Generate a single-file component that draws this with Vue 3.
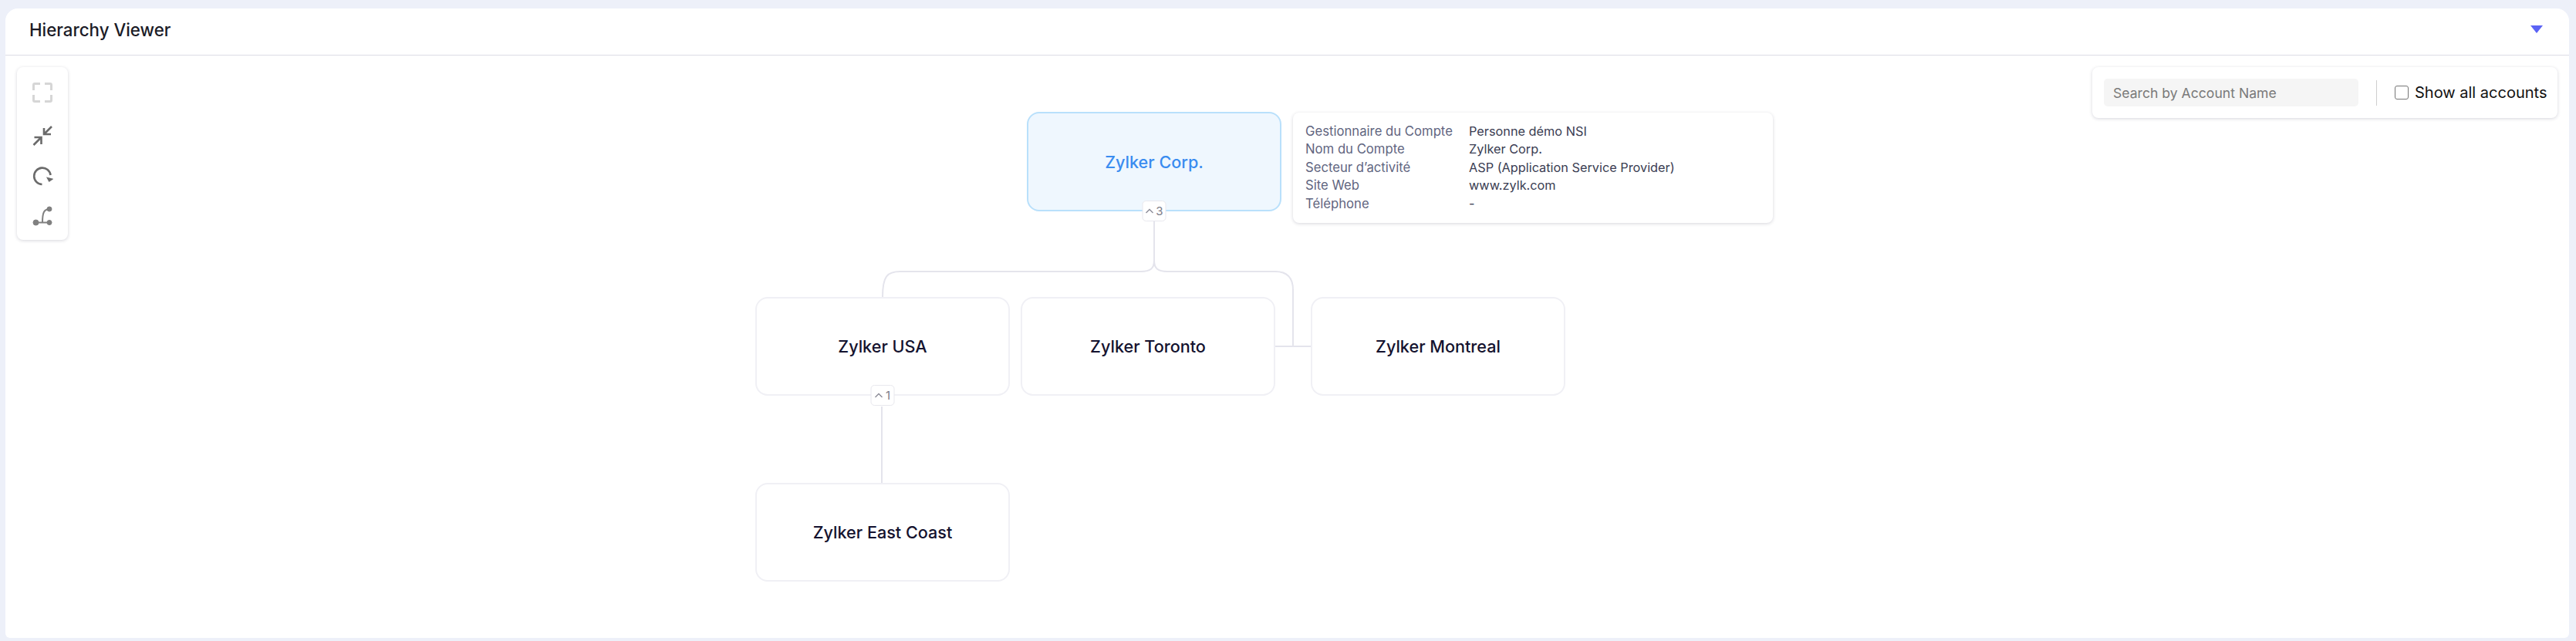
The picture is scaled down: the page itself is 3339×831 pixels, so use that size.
<script setup>
import { ref } from 'vue'

const showAll = ref(false)
const search = ref('')

// node places on the diagram, relative to the canvas
const nodes = [
  { id: 'corp', name: 'Zylker Corp.', x: 1324, y: 73, root: true, count: 3 },
  { id: 'usa', name: 'Zylker USA', x: 972, y: 313, count: 1 },
  { id: 'toronto', name: 'Zylker Toronto', x: 1316, y: 313 },
  { id: 'montreal', name: 'Zylker Montreal', x: 1692, y: 313 },
  { id: 'east', name: 'Zylker East Coast', x: 972, y: 554 }
]

const details = [
  { label: 'Gestionnaire du Compte', value: 'Personne démo NSI' },
  { label: 'Nom du Compte', value: 'Zylker Corp.' },
  { label: "Secteur d’activité", value: 'ASP (Application Service Provider)' },
  { label: 'Site Web', value: 'www.zylk.com' },
  { label: 'Téléphone', value: '-' }
]

const links = [
  'M1489 215V266C1489 276 1484 280 1472 280H1160C1143 280 1137 286 1137 313',
  'M1489 266C1489 276 1494 280 1506 280H1646C1662 280 1669 288 1669 304V377',
  'M1646 377H1692',
  'M1136 455V554'
]
</script>

<template>
  <div class="page">
    <section class="panel">
      <header class="panel-head">
        <h1 class="panel-title">Hierarchy Viewer</h1>
        <span class="caret"></span>
      </header>

      <div class="canvas">
        <svg class="links" width="3323" height="744" fill="none">
          <path v-for="(d, i) in links" :key="i" :d="d" />
        </svg>

        <div
          v-for="node in nodes"
          :key="node.id"
          class="node"
          :class="{ root: node.root }"
          :style="{ left: node.x + 'px', top: node.y + 'px' }"
        >
          {{ node.name }}
          <span v-if="node.count" class="count">
            <svg width="11" height="7" viewBox="0 0 11 7" fill="none">
              <path d="M1 6l4.5-4.5L10 6" />
            </svg>
            {{ node.count }}
          </span>
        </div>

        <div class="details">
          <template v-for="row in details" :key="row.label">
            <span class="details-label">{{ row.label }}</span>
            <span class="details-value">{{ row.value }}</span>
          </template>
        </div>

        <div class="tools">
          <svg class="tool" width="28" height="28" viewBox="0 0 28 28" fill="none" stroke="#d6d6d6" stroke-width="3">
            <path d="M2.5 11V4a1.5 1.5 0 0 1 1.5-1.5h7M17 2.5h7A1.5 1.5 0 0 1 25.5 4v7M25.5 17v7a1.5 1.5 0 0 1-1.5 1.5h-7M11 25.5H4A1.5 1.5 0 0 1 2.5 24v-7" />
          </svg>
          <svg class="tool" width="28" height="28" viewBox="0 0 28 28" fill="none" stroke="#6b6b6b" stroke-width="2.6">
            <path d="M26 2L16 12M16 4v8h9M2.5 26l10-10M3.500 16h9v9" />
          </svg>
          <svg class="tool" width="28" height="28" viewBox="0 0 28 28" fill="none">
            <path d="M13.500 25A10.700 10.700 0 1 1 24.500 13" stroke="#6b6b6b" stroke-width="2.600" />
            <path d="M19 15.500L28.500 18 22.500 22z" fill="#6b6b6b" />
          </svg>
          <svg class="tool" width="28" height="28" viewBox="0 0 28 28" fill="#808080" stroke="#808080">
            <path d="M6 22.500H23M14 22.500C14 10 16 5 23 5" fill="none" stroke-width="2" />
            <circle cx="5.500" cy="22.500" r="3.500" />
            <circle cx="23" cy="22.500" r="3" />
            <circle cx="23" cy="5" r="3" />
          </svg>
        </div>

        <div class="filter">
          <input v-model="search" class="filter-input" type="text" placeholder="Search by Account Name" />
          <span class="filter-rule"></span>
          <label class="filter-check">
            <input v-model="showAll" type="checkbox" />
            Show all accounts
          </label>
        </div>
      </div>
    </section>
  </div>
</template>

<style>
body {
  margin: 0;
  background: #edf0f9;
}
</style>

<style scoped>
.page {
  box-sizing: border-box;
  height: 831px;
  padding: 11px 9px 4px 7px;
  overflow: hidden;
  font-family: Inter, "Liberation Sans", sans-serif;
}

.panel {
  display: flex;
  flex-direction: column;
  height: 100%;
  background: #fff;
  border-radius: 16px 16px 6px 6px;
}

.panel-head {
  display: flex;
  align-items: center;
  justify-content: space-between;
  flex-shrink: 0;
  box-sizing: border-box;
  height: 61px;
  padding: 0 34px 6px 31px;
  border-bottom: 1px solid #dcdce6;
}

.panel-title {
  margin: 0;
  font-size: 22.3px;
  font-weight: 500;
  color: #1b1b26;
}

.caret {
  width: 0;
  height: 0;
  border-left: 8px solid transparent;
  border-right: 8px solid transparent;
  border-top: 10px solid #5b63f5;
}

.canvas {
  position: relative;
  flex: 1;
}

.links {
  position: absolute;
  top: 0;
  left: 0;
}

.links path {
  stroke: #e4e4ec;
  stroke-width: 2;
}

.node {
  position: absolute;
  display: flex;
  align-items: center;
  justify-content: center;
  box-sizing: border-box;
  width: 330px;
  height: 128px;
  background: #fff;
  border: 2px solid #f0f0f5;
  border-radius: 16px;
  font-size: 21.6px;
  font-weight: 500;
  color: #14122e;
}

.node.root {
  height: 129px;
  background: #eff7fe;
  border-color: #b9e0fb;
  color: #3a8cf0;
}

.count {
  position: absolute;
  left: 50%;
  bottom: -15px;
  display: flex;
  align-items: center;
  justify-content: center;
  gap: 3px;
  box-sizing: border-box;
  width: 31px;
  height: 27px;
  transform: translateX(-50%);
  background: #fff;
  border: 1px solid #e8e8ee;
  border-radius: 5px;
  font-size: 15px;
  font-weight: 400;
  color: #7c7c88;
}

.count path {
  stroke: #8a8a96;
  stroke-width: 1.3;
}

.details {
  position: absolute;
  left: 1669px;
  top: 74px;
  display: grid;
  grid-template-columns: 212px 1fr;
  box-sizing: border-box;
  width: 622px;
  height: 143px;
  padding: 13px 16px;
  background: #fff;
  border-radius: 8px;
  box-shadow: 0 1px 4px rgba(30, 30, 60, 0.18);
  font-size: 16.3px;
  line-height: 23.4px;
}

.details-label {
  color: #5f6580;
  font-size: 16.7px;
}

.details-value {
  color: #3a3d52;
}

.tools {
  position: absolute;
  left: 15px;
  top: 15px;
  display: flex;
  flex-direction: column;
  align-items: center;
  gap: 24px;
  box-sizing: border-box;
  width: 66px;
  height: 224px;
  padding-top: 19px;
  background: #fff;
  border-radius: 8px;
  box-shadow: 0 1px 4px rgba(30, 30, 60, 0.18);
}

.tool:first-child {
  margin-bottom: 4px;
}

.filter {
  position: absolute;
  left: 2705px;
  top: 15px;
  display: flex;
  align-items: center;
  box-sizing: border-box;
  width: 603px;
  height: 66px;
  padding-left: 15px;
  background: #fff;
  border-radius: 8px;
  box-shadow: 0 1px 4px rgba(30, 30, 60, 0.18);
}

.filter-input {
  flex-shrink: 0;
  box-sizing: border-box;
  width: 330px;
  height: 36px;
  padding: 0 12px;
  background: #f5f5f5;
  border: none;
  border-radius: 5px;
  outline: none;
  font: 400 17.6px Inter, "Liberation Sans", sans-serif;
}

.filter-input::placeholder {
  color: #7a7a7a;
}

.filter-rule {
  flex-shrink: 0;
  width: 1px;
  height: 33px;
  margin: 0 23px;
  background: #cfcfcf;
}

.filter-check {
  display: flex;
  align-items: center;
  gap: 8px;
  font-size: 20px;
  color: #111;
  white-space: nowrap;
}

.filter-check input {
  appearance: none;
  box-sizing: border-box;
  width: 18px;
  height: 18px;
  margin: 0;
  border: 1.5px solid #767676;
  border-radius: 3px;
}
</style>
